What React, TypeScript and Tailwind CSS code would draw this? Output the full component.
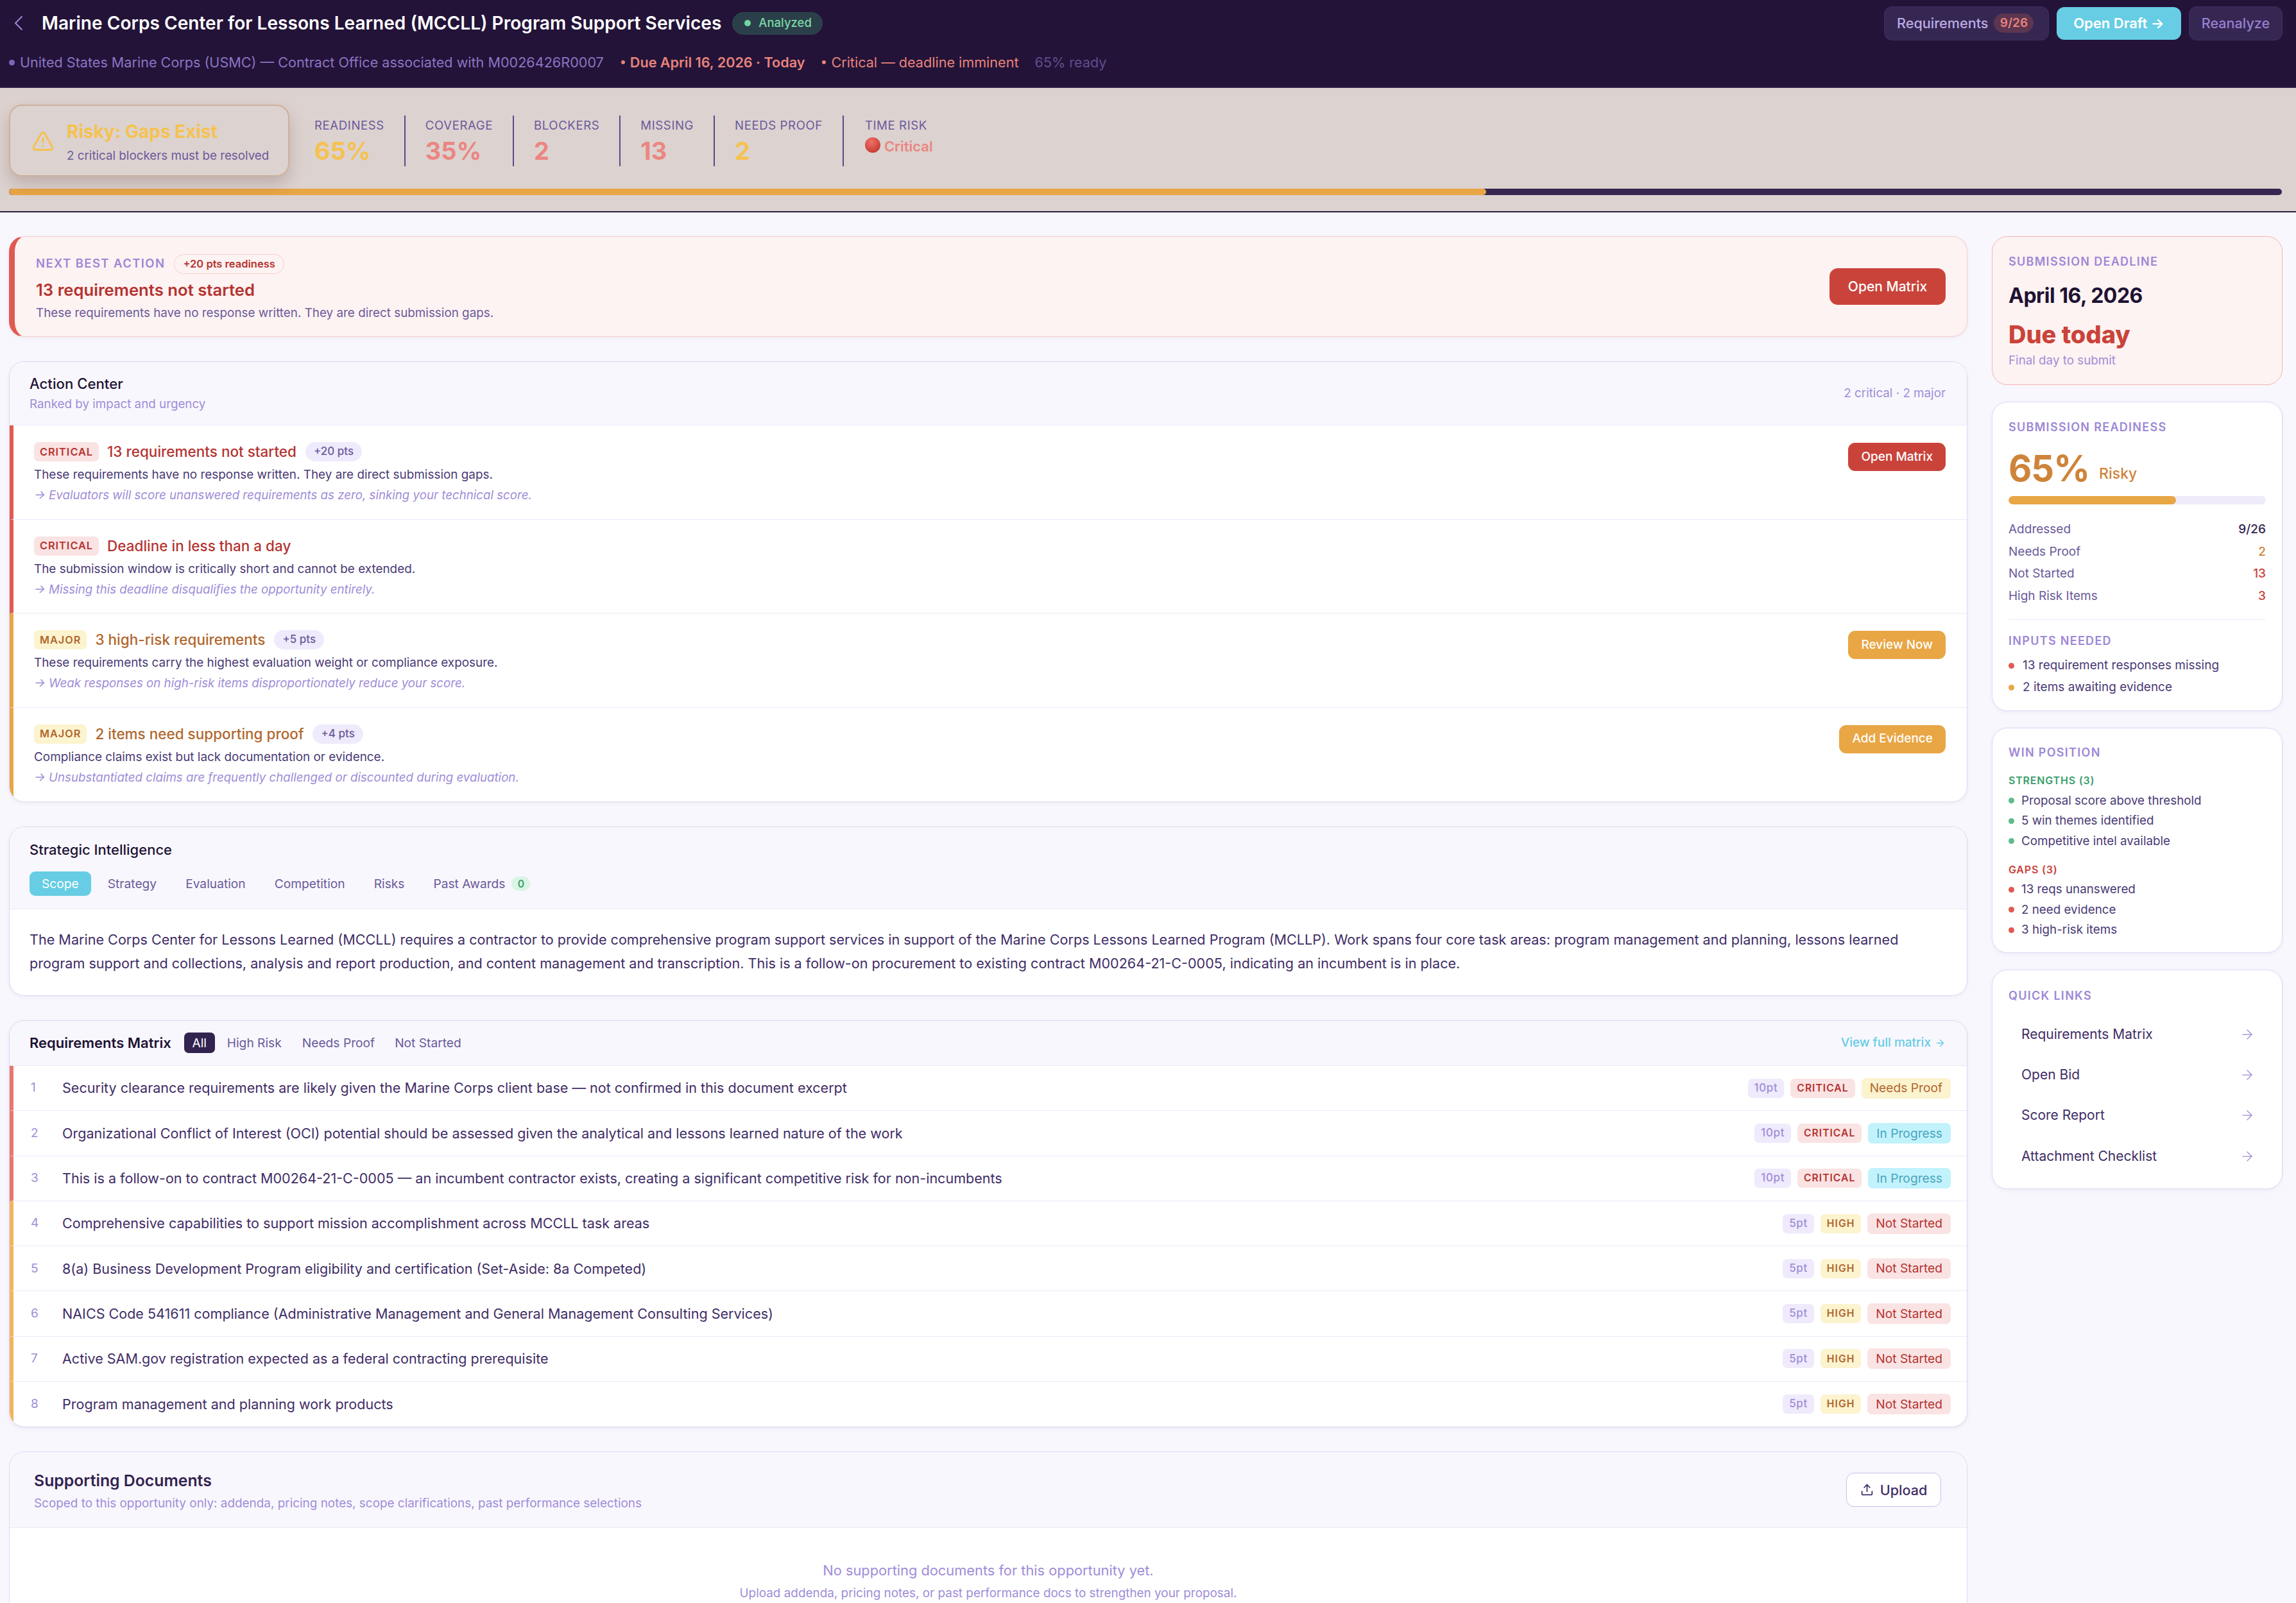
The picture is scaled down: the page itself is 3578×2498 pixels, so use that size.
import { ArrowRight, ChevronLeft, TriangleAlert, Upload } from 'lucide-react';

const stats = [
  { label: 'Readiness', value: '65%', color: 'text-[#F5C24F]' },
  { label: 'Coverage', value: '35%', color: 'text-[#EB8680]' },
  { label: 'Blockers', value: '2', color: 'text-[#EB8680]' },
  { label: 'Missing', value: '13', color: 'text-[#EB8680]' },
  { label: 'Needs Proof', value: '2', color: 'text-[#F5C24F]' },
];

const actions = [
  {
    tag: 'CRITICAL',
    title: '13 requirements not started',
    pts: '+20 pts',
    desc: 'These requirements have no response written. They are direct submission gaps.',
    note: 'Evaluators will score unanswered requirements as zero, sinking your technical score.',
    btn: 'Open Matrix',
  },
  {
    tag: 'CRITICAL',
    title: 'Deadline in less than a day',
    desc: 'The submission window is critically short and cannot be extended.',
    note: 'Missing this deadline disqualifies the opportunity entirely.',
  },
  {
    tag: 'MAJOR',
    title: '3 high-risk requirements',
    pts: '+5 pts',
    desc: 'These requirements carry the highest evaluation weight or compliance exposure.',
    note: 'Weak responses on high-risk items disproportionately reduce your score.',
    btn: 'Review Now',
  },
  {
    tag: 'MAJOR',
    title: '2 items need supporting proof',
    pts: '+4 pts',
    desc: 'Compliance claims exist but lack documentation or evidence.',
    note: 'Unsubstantiated claims are frequently challenged or discounted during evaluation.',
    btn: 'Add Evidence',
  },
];

const requirements = [
  { text: 'Security clearance requirements are likely given the Marine Corps client base — not confirmed in this document excerpt', pts: '10pt', level: 'CRITICAL', status: 'Needs Proof' },
  { text: 'Organizational Conflict of Interest (OCI) potential should be assessed given the analytical and lessons learned nature of the work', pts: '10pt', level: 'CRITICAL', status: 'In Progress' },
  { text: 'This is a follow-on to contract M00264-21-C-0005 — an incumbent contractor exists, creating a significant competitive risk for non-incumbents', pts: '10pt', level: 'CRITICAL', status: 'In Progress' },
  { text: 'Comprehensive capabilities to support mission accomplishment across MCCLL task areas', pts: '5pt', level: 'HIGH', status: 'Not Started' },
  { text: '8(a) Business Development Program eligibility and certification (Set-Aside: 8a Competed)', pts: '5pt', level: 'HIGH', status: 'Not Started' },
  { text: 'NAICS Code 541611 compliance (Administrative Management and General Management Consulting Services)', pts: '5pt', level: 'HIGH', status: 'Not Started' },
  { text: 'Active SAM.gov registration expected as a federal contracting prerequisite', pts: '5pt', level: 'HIGH', status: 'Not Started' },
  { text: 'Program management and planning work products', pts: '5pt', level: 'HIGH', status: 'Not Started' },
];

const statusStyle: Record<string, string> = {
  'Needs Proof': 'bg-[#FCF3CF] text-[#B0672E]',
  'In Progress': 'bg-[#C2F2FC] text-[#4AA5BE]',
  'Not Started': 'bg-[#FAE3E3] text-[#B53330]',
};

function Dot({ color }: { color: string }) {
  return <span className={`w-[9px] h-[9px] rounded-full shrink-0 ${color}`} />;
}

function Header() {
  return (
    <header className="h-[137px] bg-[#231338] border-b-2 border-[#2F2046] pl-[14px] pr-[21px]">
      <div className="flex items-center h-[72px]">
        <ChevronLeft size={40} strokeWidth={1.2} className="text-[#9D87D6] -ml-[5px]" />
        <h1 className="ml-[16px] text-[28.1px] font-semibold text-white whitespace-nowrap">
          Marine Corps Center for Lessons Learned (MCCLL) Program Support Services
        </h1>
        <span className="ml-[17px] h-[35px] pl-[18px] pr-[16px] flex items-center gap-[12px] rounded-full bg-[#2A3F49] border border-[#2F4A50] text-[18.5px] font-medium text-[#7BD8A5]">
          <span className="w-[10px] h-[10px] rounded-full bg-[#6FD6A0]" />
          Analyzed
        </span>
        <div className="ml-auto flex items-center gap-[12px]">
          <button className="h-[53px] w-[257px] pl-[19px] flex items-center gap-[9px] rounded-[12px] bg-[#352752] border border-[#3F2F60] text-[21.6px] font-medium text-[#BBABE4]">
            Requirements
            <span className="h-[30px] w-[62px] flex items-center justify-center rounded-full bg-[#5C3550] text-[19px] font-semibold text-[#E8837C]">9/26</span>
          </button>
          <button className="h-[51px] w-[194px] rounded-[12px] bg-[#66CDE4] text-[22px] font-semibold text-white">Open Draft →</button>
          <button className="h-[53px] w-[146px] rounded-[12px] bg-[#352752] border border-[#3F2F60] text-[21.6px] font-medium text-[#9680CF]">Reanalyze</button>
        </div>
      </div>
      <div className="flex items-center h-[50px] text-[21.6px] whitespace-nowrap">
        <Dot color="w-[6px] h-[6px] bg-[#7C66B8]" />
        <span className="ml-[8px] text-[#8B75C4]">United States Marine Corps (USMC) — Contract Office associated with M0026426R0007</span>
        <span className="ml-[27px] w-[6px] h-[6px] rounded-full bg-[#E8837C]" />
        <span className="ml-[8px] font-semibold text-[#E8837C]">Due April 16, 2026 · Today</span>
        <span className="ml-[27px] w-[6px] h-[6px] rounded-full bg-[#E8837C]" />
        <span className="ml-[8px] text-[#E8837C]">Critical — deadline imminent</span>
        <span className="ml-[25px] text-[#5F4E90]">65% ready</span>
      </div>
    </header>
  );
}

function StatusBand() {
  return (
    <section className="h-[194px] bg-[#DCD2D0] border-b-2 border-[#2F2046] pl-[14px] pr-[22px] pt-[26px]">
      <div className="flex items-center h-[112px]">
        <div className="w-[437px] h-[112px] rounded-[20px] border-2 border-[#CDB09B] shadow-[0_12px_24px_rgba(90,50,40,0.22)] flex items-center pl-[33px] gap-[19px]">
          <TriangleAlert size={36} strokeWidth={2} className="text-[#F5C24F] shrink-0 mt-[2px]" />
          <div className="pt-[4px]">
            <div className="text-[28px] leading-[36px] font-bold text-[#F5C24F] whitespace-nowrap">Risky: Gaps Exist</div>
            <div className="mt-[7px] text-[18.8px] leading-[26px] text-[#6B5A9A] whitespace-nowrap">2 critical blockers must be resolved</div>
          </div>
        </div>
        <div className="flex ml-[8px]">
          {stats.map((s) => (
            <div key={s.label} className="h-[79px] px-[31px] pt-[2px] border-r-2 border-[#5A4A86]">
              <div className="text-[18.6px] leading-[26px] tracking-[0.6px] uppercase text-[#6B5A9A] whitespace-nowrap">{s.label}</div>
              <div className={`mt-[4px] text-[38px] leading-[46px] font-bold ${s.color}`}>{s.value}</div>
            </div>
          ))}
          <div className="h-[79px] pl-[33px] pt-[2px]">
            <div className="text-[18.6px] leading-[26px] tracking-[0.6px] uppercase text-[#6B5A9A] whitespace-nowrap">Time Risk</div>
            <div className="mt-[4px] h-[46px] flex items-start gap-[6px] text-[22px] font-semibold text-[#EB8680]">
              <span className="mt-[2px] w-[24px] h-[24px] rounded-full bg-[radial-gradient(circle_at_40%_30%,#F0706A,#B92C22)]" />
              Critical
            </div>
          </div>
        </div>
      </div>
      <div className="mt-[19px] h-[10px] rounded-full bg-[#352752] overflow-hidden">
        <div className="h-full w-[65%] rounded-full bg-[#E8A645]" />
      </div>
    </section>
  );
}

function NextBestAction() {
  return (
    <section className="h-[157px] rounded-[24px] bg-[#FDF3F2] border border-[#F6CFCD] border-l-[9px] border-l-[#E05A52] shadow-[0_2px_6px_rgba(60,30,120,0.06)] pl-[33px] pr-[33px] flex items-center justify-between">
      <div className="pt-[4px]">
        <div className="flex items-center gap-[14px]">
          <span className="text-[18.5px] font-semibold tracking-[1.4px] text-[#9D87D6]">NEXT BEST ACTION</span>
          <span className="h-[31px] px-[13px] flex items-center rounded-full border border-[#F6CFCD] text-[16.5px] font-semibold text-[#B53330]">+20 pts readiness</span>
        </div>
        <div className="mt-[7px] text-[25.7px] leading-[36px] font-semibold text-[#B53330]">13 requirements not started</div>
        <div className="mt-[4px] text-[18.85px] leading-[28px] text-[#6B5A9A]">These requirements have no response written. They are direct submission gaps.</div>
      </div>
      <button className="w-[181px] h-[57px] rounded-[13px] bg-[#CA433A] text-[21px] font-medium text-white">Open Matrix</button>
    </section>
  );
}

function ActionCenter() {
  return (
    <section className="rounded-[24px] bg-white border border-[#DDD8F5] shadow-[0_2px_6px_rgba(60,30,120,0.06)] overflow-hidden">
      <div className="h-[99px] bg-[#F8F7FD] border-b border-[#ECE9F8] pl-[31px] pr-[33px] flex items-center justify-between">
        <div>
          <div className="text-[22.2px] leading-[32px] font-medium text-[#1E1233]">Action Center</div>
          <div className="mt-[2px] text-[18.8px] leading-[28px] text-[#A08DD8]">Ranked by impact and urgency</div>
        </div>
        <div className="text-[18.8px] text-[#A08DD8]">2 critical · 2 major</div>
      </div>
      {actions.map((a) => {
        const critical = a.tag === 'CRITICAL';
        return (
          <div
            key={a.title}
            className={`h-[146.5px] border-b last:border-b-0 border-[#ECE9F8] border-l-[6px] pl-[32px] pr-[33px] pt-[26px] flex justify-between items-start ${critical ? 'border-l-[#E05A52]' : 'border-l-[#E8A645]'}`}
          >
            <div>
              <div className="flex items-center h-[30px]">
                <span className={`h-[30px] px-[9px] flex items-center rounded-[7px] text-[16.3px] font-semibold tracking-[1px] ${critical ? 'bg-[#FAE3E3] text-[#B53330]' : 'bg-[#FCF3CF] text-[#B0672E]'}`}>{a.tag}</span>
                <span className={`ml-[13px] text-[22.5px] font-medium ${critical ? 'text-[#B53330]' : 'text-[#B0672E]'}`}>{a.title}</span>
                {a.pts && <span className="ml-[14px] h-[30px] px-[13px] flex items-center rounded-full bg-[#EFEAFC] text-[17px] font-medium text-[#6B5A9A]">{a.pts}</span>}
              </div>
              <div className="mt-[7px] text-[18.9px] leading-[28px] text-[#4A3A75]">{a.desc}</div>
              <div className="mt-[4px] text-[18.7px] leading-[28px] italic text-[#A08DD8]">→ {a.note}</div>
            </div>
            {a.btn && (
              <button className={`mt-[1px] h-[44px] px-[20px] rounded-[11px] text-[19px] font-medium text-white ${critical ? 'bg-[#CA433A]' : 'bg-[#E8A645]'}`}>{a.btn}</button>
            )}
          </div>
        );
      })}
    </section>
  );
}

function StrategicIntelligence() {
  const tabs = ['Strategy', 'Evaluation', 'Competition', 'Risks', 'Past Awards'];
  return (
    <section className="rounded-[24px] bg-white border border-[#DDD8F5] shadow-[0_2px_6px_rgba(60,30,120,0.06)] overflow-hidden">
      <div className="h-[128px] bg-[#F8F7FD] border-b border-[#ECE9F8] pl-[31px] pt-[19px]">
        <div className="text-[22px] leading-[32px] font-medium text-[#1E1233]">Strategic Intelligence</div>
        <div className="mt-[18px] flex items-center gap-[7px] text-[19.2px] text-[#6B5A9A]">
          <span className="h-[38px] px-[19px] flex items-center rounded-[9px] bg-[#66CDE4] text-white">Scope</span>
          {tabs.map((t) => (
            <span key={t} className="h-[38px] px-[19px] flex items-center">
              {t}
              {t === 'Past Awards' && <span className="ml-[10px] w-[29px] h-[22px] flex items-center justify-center rounded-full bg-[#D9F5E4] text-[16px] font-medium text-[#2F8F5F]">0</span>}
            </span>
          ))}
        </div>
      </div>
      <p className="pl-[31px] pr-[33px] pt-[29px] pb-[32px] text-[21.6px] leading-[36.5px] text-[#3F2D66]">
        The Marine Corps Center for Lessons Learned (MCCLL) requires a contractor to provide comprehensive program support services in support of the Marine Corps Lessons Learned Program (MCLLP). Work spans four core task areas: program management and planning, lessons learned program support and collections, analysis and report production, and content management and transcription. This is a follow-on procurement to existing contract M00264-21-C-0005, indicating an incumbent is in place.
      </p>
    </section>
  );
}

function RequirementsMatrix() {
  return (
    <section className="rounded-[24px] bg-white border border-[#DDD8F5] shadow-[0_2px_6px_rgba(60,30,120,0.08)] overflow-hidden">
      <div className="h-[70px] bg-[#F8F7FD] border-b border-[#ECE9F8] pl-[31px] pr-[33px] pb-[1px] flex items-center">
        <span className="text-[22px] font-semibold text-[#1E1233]">Requirements Matrix</span>
        <span className="ml-[20px] w-[48px] h-[32px] flex items-center justify-center rounded-[7px] bg-[#32234F] text-[19.2px] text-white">All</span>
        <span className="ml-[19px] text-[19.2px] text-[#6B5A9A]">High Risk</span>
        <span className="ml-[32px] text-[19.2px] text-[#6B5A9A]">Needs Proof</span>
        <span className="ml-[31px] text-[19.2px] text-[#6B5A9A]">Not Started</span>
        <span className="ml-auto flex items-center gap-[6px] text-[19px] font-medium text-[#66CDE4]">View full matrix <ArrowRight size={17} /></span>
      </div>
      {requirements.map((r, i) => {
        const critical = r.level === 'CRITICAL';
        return (
          <div
            key={r.text}
            className={`h-[70.3px] flex items-center border-b last:border-b-0 border-[#ECE9F8] border-l-[6px] pr-[25px] ${critical ? 'border-l-[#E8776F]' : 'border-l-[#F0B45F]'}`}
          >
            <span className="w-[50px] pl-[27px] text-[19px] text-[#A08DD8] shrink-0">{i + 1}</span>
            <span className="ml-[26px] text-[21.55px] text-[#3F2D66] whitespace-nowrap">{r.text}</span>
            <div className="ml-auto flex items-center gap-[10px]">
              <span className="h-[30px] px-[10px] flex items-center rounded-[7px] bg-[#EFEAFC] text-[17px] font-medium tracking-[0.6px] text-[#A08DD8]">{r.pts}</span>
              <span className={`h-[30px] px-[10px] flex items-center rounded-[7px] text-[15.7px] font-semibold tracking-[1px] ${critical ? 'bg-[#FAE3E3] text-[#B53330]' : 'bg-[#FCF3CF] text-[#B0672E]'}`}>{r.level}</span>
              <span className={`h-[32px] px-[13px] flex items-center rounded-[7px] text-[19.2px] ${statusStyle[r.status]}`}>{r.status}</span>
            </div>
          </div>
        );
      })}
    </section>
  );
}

function SupportingDocuments() {
  return (
    <section className="rounded-t-[24px] bg-white border border-b-0 border-[#DDD8F5] overflow-hidden">
      <div className="h-[118px] bg-[#F8F7FD] border-b border-[#ECE9F8] pl-[38px] pr-[40px] flex items-center justify-between">
        <div className="pt-[3px]">
          <div className="text-[24.8px] leading-[34px] font-semibold text-[#32234F]">Supporting Documents</div>
          <div className="mt-[5px] text-[18.9px] leading-[28px] text-[#A08DD8]">Scoped to this opportunity only: addenda, pricing notes, scope clarifications, past performance selections</div>
        </div>
        <button className="w-[148px] h-[53px] flex items-center justify-center gap-[10px] rounded-[12px] bg-white border-[1.5px] border-[#C9BEEE] text-[21.6px] font-medium text-[#3F2D66]">
          <Upload size={21} /> Upload
        </button>
      </div>
      <div className="pt-[50px] pb-[40px] text-center text-[#A08DD8]">
        <div className="text-[21.8px] leading-[32px]">No supporting documents for this opportunity yet.</div>
        <div className="mt-[6px] text-[18.9px] leading-[28px]">Upload addenda, pricing notes, or past performance docs to strengthen your proposal.</div>
      </div>
    </section>
  );
}

function Sidebar() {
  const rowClass = 'flex justify-between h-[34.7px] items-center';
  return (
    <aside className="w-[453px] shrink-0 flex flex-col gap-[26px]">
      <section className="h-[232px] rounded-[24px] bg-[#FDF3F2] border border-[#F5B5B2] px-[25px] pt-[26px]">
        <div className="text-[18px] leading-[26px] font-semibold tracking-[1.3px] text-[#9D87D6]">SUBMISSION DEADLINE</div>
        <div className="mt-[19px] text-[32px] leading-[42px] font-bold tracking-[-0.5px] text-[#1E1233]">April 16, 2026</div>
        <div className="mt-[16px] text-[38px] leading-[46px] font-extrabold text-[#CA433A]">Due today</div>
        <div className="mt-[4px] text-[18.8px] leading-[28px] text-[#A08DD8]">Final day to submit</div>
      </section>

      <section className="h-[482px] rounded-[24px] bg-white border border-[#DDD8F5] shadow-[0_2px_6px_rgba(60,30,120,0.06)] px-[25px] pt-[26px]">
        <div className="text-[18px] leading-[26px] font-semibold tracking-[1.3px] text-[#9D87D6]">SUBMISSION READINESS</div>
        <div className="mt-[17px] h-[68px] flex items-center gap-[15px]">
          <span className="text-[56px] font-bold tracking-[-1px] text-[#CE843A]">65%</span>
          <span className="mt-[17px] text-[23px] font-medium text-[#CE843A]">Risky</span>
        </div>
        <div className="mt-[9px] h-[13px] rounded-full bg-[#EFEBFB] overflow-hidden">
          <div className="h-full w-[65%] rounded-full bg-[#E8A645]" />
        </div>
        <div className="mt-[22px] text-[19px] text-[#6B5A9A]">
          <div className={rowClass}><span>Addressed</span><span className="font-medium text-[#32234F]">9/26</span></div>
          <div className={rowClass}><span>Needs Proof</span><span className="font-medium text-[#CE843A]">2</span></div>
          <div className={rowClass}><span>Not Started</span><span className="font-medium text-[#CA433A]">13</span></div>
          <div className={rowClass}><span>High Risk Items</span><span className="font-medium text-[#CA433A]">3</span></div>
        </div>
        <div className="mt-[18px] border-t border-[#ECE9F8] pt-[20px] text-[18px] leading-[26px] font-semibold tracking-[1.3px] text-[#9D87D6]">INPUTS NEEDED</div>
        <div className="mt-[8px] text-[19px] text-[#4A3A75]">
          <div className="h-[34.5px] flex items-center gap-[13px]"><Dot color="bg-[#E05A52]" />13 requirement responses missing</div>
          <div className="h-[34.5px] flex items-center gap-[13px]"><Dot color="bg-[#E8A645]" />2 items awaiting evidence</div>
        </div>
      </section>

      <section className="h-[351px] rounded-[24px] bg-white border border-[#DDD8F5] shadow-[0_2px_6px_rgba(60,30,120,0.06)] px-[25px] pt-[25px]">
        <div className="text-[18px] leading-[26px] font-semibold tracking-[1.3px] text-[#9D87D6]">WIN POSITION</div>
        <div className="mt-[19px] text-[16px] leading-[22px] font-semibold tracking-[0.8px] text-[#3B9E6D]">STRENGTHS (3)</div>
        <div className="mt-[5px] text-[18.8px] text-[#4A3A75]">
          {['Proposal score above threshold', '5 win themes identified', 'Competitive intel available'].map((t) => (
            <div key={t} className="h-[31.5px] flex items-center gap-[11px]"><Dot color="bg-[#5FBB8A]" />{t}</div>
          ))}
        </div>
        <div className="mt-[17px] text-[16px] leading-[22px] font-semibold tracking-[0.8px] text-[#CA433A]">GAPS (3)</div>
        <div className="mt-[5px] text-[18.8px] text-[#4A3A75]">
          {['13 reqs unanswered', '2 need evidence', '3 high-risk items'].map((t) => (
            <div key={t} className="h-[31.5px] flex items-center gap-[11px]"><Dot color="bg-[#E05A52]" />{t}</div>
          ))}
        </div>
      </section>

      <section className="h-[342px] rounded-[24px] bg-white border border-[#DDD8F5] shadow-[0_2px_6px_rgba(60,30,120,0.06)] px-[25px] pt-[27px]">
        <div className="text-[18px] leading-[26px] font-semibold tracking-[1.3px] text-[#9D87D6]">QUICK LINKS</div>
        <div className="mt-[15px]">
          {['Requirements Matrix', 'Open Bid', 'Score Report', 'Attachment Checklist'].map((t) => (
            <div key={t} className="h-[63.3px] pl-[20px] pr-[17px] flex items-center justify-between text-[21px] text-[#3F2D66]">
              {t}
              <ArrowRight size={24} strokeWidth={1.25} className="text-[#9D87D6]" />
            </div>
          ))}
        </div>
      </section>
    </aside>
  );
}

export default function App() {
  return (
    <div className="h-screen overflow-hidden bg-[#F8F7FD] font-['Inter',sans-serif]">
      <Header />
      <StatusBand />
      <div className="flex items-start gap-[38px] pl-[14px] pr-[21px] pt-[37px]">
        <main className="flex-1 min-w-0 flex flex-col gap-[38px]">
          <NextBestAction />
          <ActionCenter />
          <StrategicIntelligence />
          <RequirementsMatrix />
          <SupportingDocuments />
        </main>
        <Sidebar />
      </div>
    </div>
  );
}
